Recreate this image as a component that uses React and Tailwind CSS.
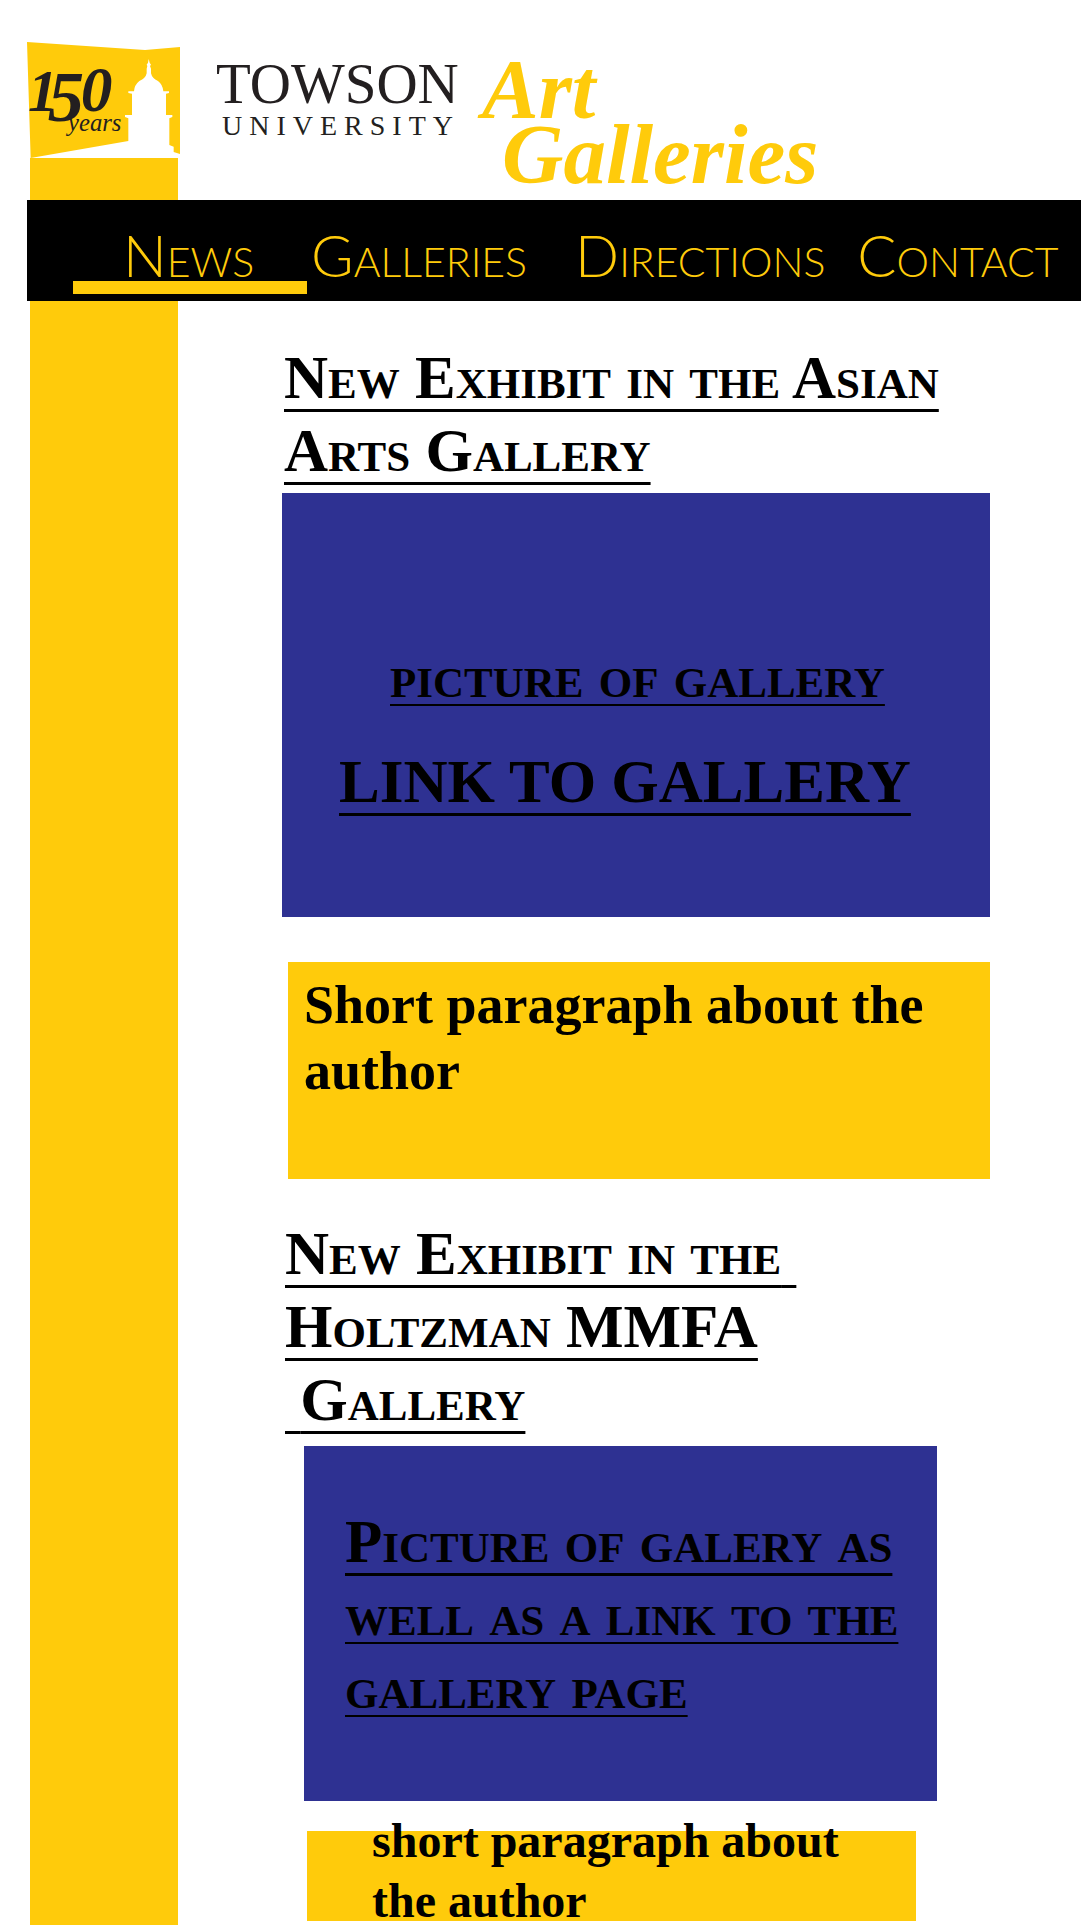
const SERIF = "font-['Liberation_Serif',serif]";

function AnniversaryMark() {
  return (
    <svg
      viewBox="81 36 459 348"
      className="block h-[116px] w-[153px]"
      role="img"
      aria-label="150 years"
    >
      <path d="M81 36L435 60L540 51V372L522 384H92Z" fill="#ffcb0b" />
      <path
        d="M92 384L385 333V265L375 261V255H396V191L385 189V184H402Q403 165 418 153Q437 145 440 130V116L442 108L440 104L444 98L446 87L449 98L453 104L450 108L453 116V130Q456 145 474 153Q488 163 490 184H507V189L498 191V255H517V261L508 265V345L521 350V366L540 372V384Z"
        fill="#fff"
      />
      <g
        fill="#231f20"
        className="font-['Liberation_Serif',serif] font-bold italic"
      >
        <text x="84" y="243" fontSize="178">1</text>
        <text x="143" y="272" fontSize="218">5</text>
        <text x="242" y="244" fontSize="190">0</text>
        <text x="204" y="302" fontSize="74" className="font-normal">years</text>
      </g>
    </svg>
  );
}

function Header() {
  return (
    <header className="flex items-start pl-[27px] pt-[42px]">
      <a href="#home" className="shrink-0">
        <AnniversaryMark />
        <div className="ml-[3px] mr-[2px] h-[42px] bg-[#ffcb0b]" />
      </a>
      <div className={`ml-9 mt-[14px] shrink-0 text-[#231f20] ${SERIF}`}>
        <div className="text-[57px] leading-[56px]">TOWSON</div>
        <div className="pl-1.5 text-[28px] leading-[28px] tracking-[0.25em]">UNIVERSITY</div>
      </div>
      <h1
        className={`ml-[22px] mt-[15px] text-[85px] font-bold italic leading-[65px] text-[#ffcb0b] ${SERIF}`}
      >
        <span className="block">Art</span>
        <span className="block pl-5">Galleries</span>
      </h1>
    </header>
  );
}

function Nav() {
  return (
    <nav className="ml-[27px] mr-[2px] flex h-[101px] items-start bg-black pt-[25px] font-['Lato',sans-serif] text-[58px] font-light leading-[60px] text-[#ffcb0b] [font-variant:small-caps]">
      <a href="#news" aria-current="page" className="relative ml-[46px] w-[234px] pl-[50px]">
        News
        <span className="absolute inset-x-0 top-[56px] h-[13px] bg-[#ffcb0b]" />
      </a>
      <a href="#galleries" className="ml-1">Galleries</a>
      <a href="#directions" className="ml-12">Directions</a>
      <a href="#contact" className="ml-8">Contact</a>
    </nav>
  );
}

const CAPS = "text-[61px] font-bold leading-[73px] underline [font-variant:small-caps] [text-decoration-skip-ink:none]";
const RULE_WIDE = "decoration-[3px] underline-offset-[11px]";
const RULE_THIN = "decoration-[2px] underline-offset-[7px]";

export default function App() {
  return (
    <div className="overflow-clip bg-white text-black">
      <Header />
      <Nav />
      <div className="flex">
        <div className="ml-[30px] w-[148px] shrink-0 bg-[#ffcb0b]" />
        <main className={`ml-[104px] mr-[93px] flex-1 pb-1 pt-10 ${SERIF}`}>
          <section>
            <h2 className={`pl-0.5 ${CAPS} ${RULE_WIDE}`}>
              New Exhibit in the Asian
              <br />
              Arts Gallery
            </h2>
            <div className="mt-1.5 flex flex-col items-start gap-8 bg-[#2e3192] pb-[99px] pt-[147px]">
              <a href="#asian-picture" className={`ml-[108px] ${CAPS} ${RULE_THIN}`}>
                picture of gallery
              </a>
              <a href="#asian-gallery" className={`ml-[57px] ${CAPS} ${RULE_WIDE}`}>
                LINK TO GALLERY
              </a>
            </div>
            <p className="ml-1.5 mt-[45px] bg-[#ffcb0b] pb-[75px] pl-4 pt-2.5 text-[54px] font-bold leading-[66px]">
              Short paragraph about the
              <br />
              author
            </p>
          </section>

          <section className="mt-[38px]">
            <h2 className={`pl-[3px] ${CAPS} ${RULE_WIDE}`}>
              New Exhibit in the{"\u00a0"}
              <br />
              Holtzman MMFA
              <br />
              {"\u00a0"}Gallery
            </h2>
            <div className="ml-[22px] mr-[53px] mt-2.5 bg-[#2e3192] pb-[77px] pl-[41px] pt-[59px]">
              <a href="#holtzman-gallery" className="block">
                <span className={`block ${CAPS} ${RULE_WIDE}`}>Picture of galery as</span>
                <span className={`block ${CAPS} ${RULE_THIN}`}>well as a link to the</span>
                <span className={`block ${CAPS} ${RULE_THIN}`}>gallery page</span>
              </a>
            </div>
            <div className="ml-[25px] mr-[74px] mt-[30px] flex bg-[#ffcb0b] pl-[65px]">
              <p className="-mb-2.5 -mt-5 text-[48px] font-bold leading-[60px]">
                short paragraph about
                <br />
                the author
              </p>
            </div>
          </section>
        </main>
      </div>
    </div>
  );
}
